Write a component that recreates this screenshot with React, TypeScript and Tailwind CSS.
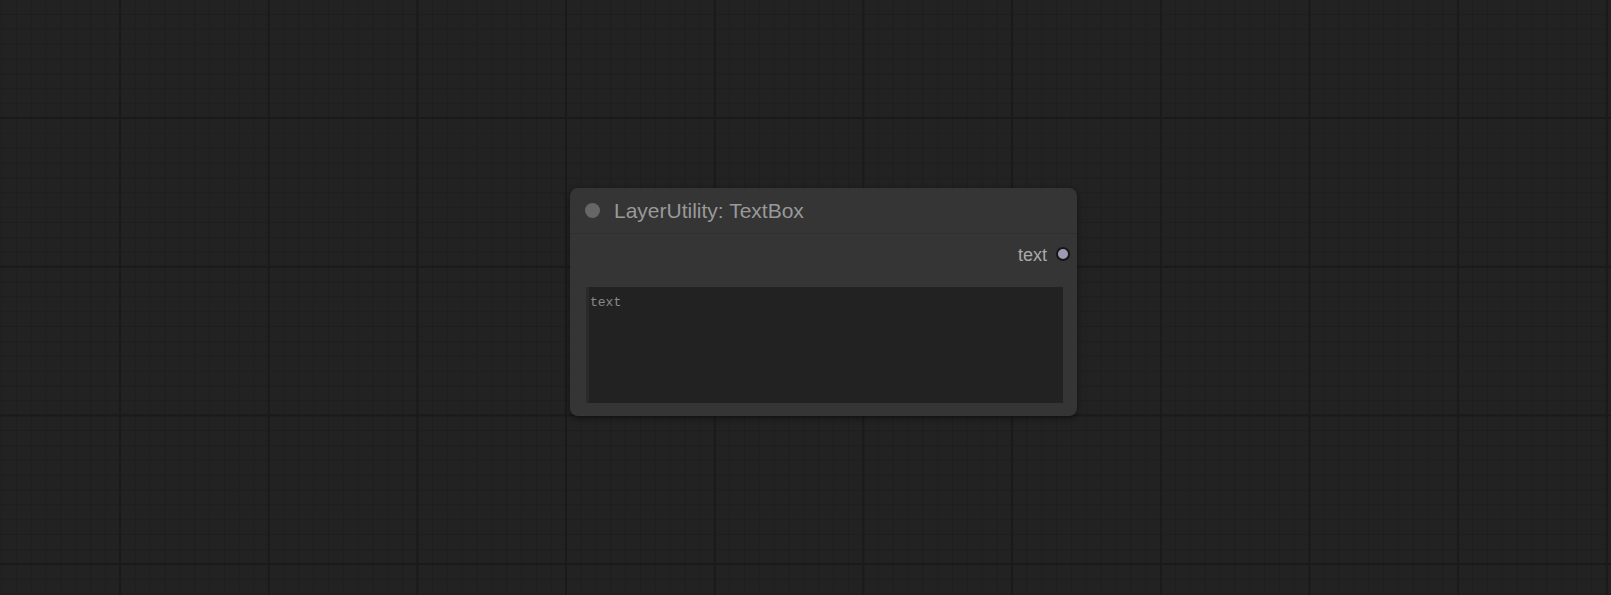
import React from 'react';

function CanvasNode() {
  return (
    <div className="absolute left-[570px] top-[188px] w-[507px] rounded-[8px] bg-[#353535] shadow-[0_2px_6px_rgba(0,0,0,0.45)]">
      <div className="flex h-[45px] items-center pl-[15px]">
        <div className="h-[15px] w-[15px] rounded-full bg-[#666]" />
        <span className="ml-[14px] text-[21px] leading-[24px] text-[#999] font-['Liberation_Sans',Arial,sans-serif]">
          LayerUtility: TextBox
        </span>
      </div>
      <div className="h-px bg-[#2f2f2f]" />
      <div className="flex h-[40px] items-center justify-end gap-[9px] pr-[7px]">
        <span className="pt-[2px] text-[18px] leading-[20px] text-[#aaa] font-['Liberation_Sans',Arial,sans-serif]">
          text
        </span>
        <div className="h-[14px] w-[14px] rounded-full border-2 border-[#161616] bg-[#9d9ab4]" />
      </div>
      <div className="pl-[16px] pr-[14px] pt-[13px] pb-[13px]">
        <div className="h-[116px] border-l-[3px] border-[#2a2a2a] bg-[#222] pl-[1px] pt-[1px]">
          <span className="text-[13px] leading-[16px] text-[#8a8a8a] font-['Liberation_Mono','DejaVu_Sans_Mono',monospace]">
            text
          </span>
        </div>
      </div>
    </div>
  );
}

export default function App() {
  return (
    <div className="relative h-[595px] w-full overflow-hidden bg-[#222222] bg-[linear-gradient(to_right,#1a1a1a_2px,transparent_2px),linear-gradient(to_bottom,#1a1a1a_2px,transparent_2px),linear-gradient(to_right,#1e1e1e_1px,transparent_1px),linear-gradient(to_bottom,#1e1e1e_1px,transparent_1px)] bg-size-[148.7px_148.7px,148.7px_148.7px,14.87px_14.87px,14.87px_14.87px] bg-position-[119px_0,0_117px,1px_0,0_14px]">
      <CanvasNode />
    </div>
  );
}
